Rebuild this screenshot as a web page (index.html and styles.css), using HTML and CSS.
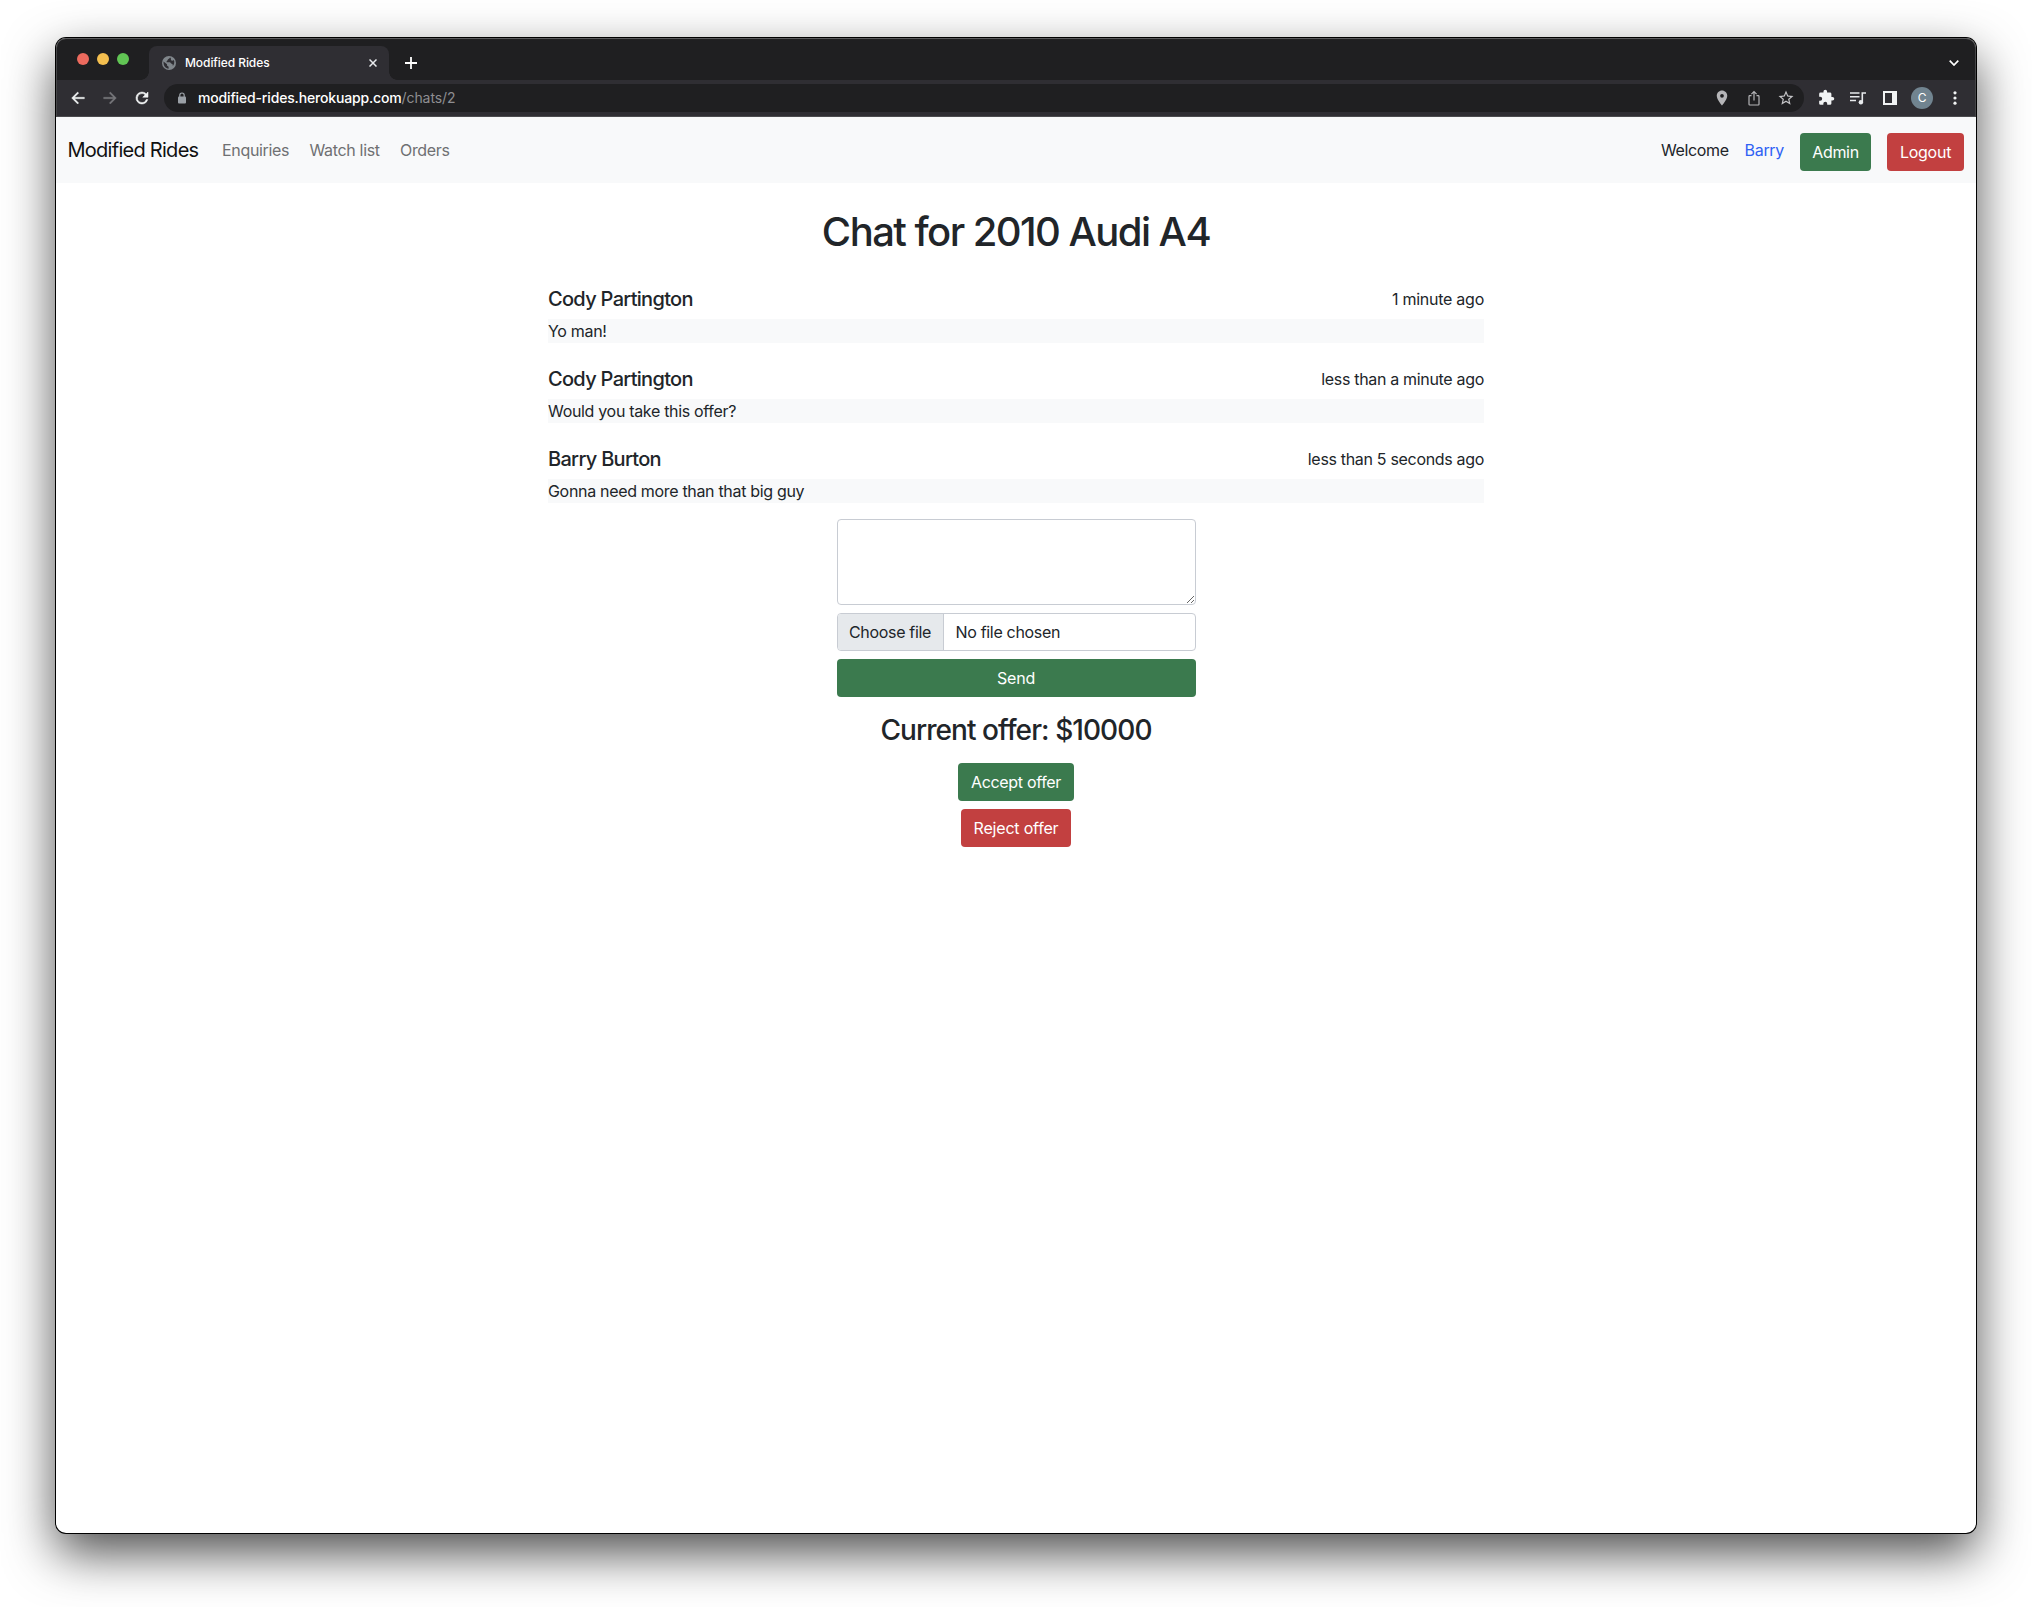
FILE: index.html
```
<!DOCTYPE html>
<html lang="en">
<head>
<meta charset="utf-8">
<title>Modified Rides</title>
<link rel="stylesheet" href="styles.css">
</head>
<body>
<div class="window">
  <header class="tabstrip">
    <div class="lights"><i class="light red"></i><i class="light yellow"></i><i class="light green"></i></div>
    <div class="tab">
      <svg class="favicon" viewBox="0 0 14 14"><circle cx="7" cy="7" r="7" fill="#80868b"/><path d="M1.500 5.600 5 8.200v1.400l1.600 1.100v2C3.600 12.500 1.300 10 1.500 5.600zM8 1.500c-.4 1.300-1.800 1.300-2.400 2.600C5.200 5.200 4.400 5 4.600 6.300h3.200c1 0 .8 1.500 1.900 1.500.9 0 1.200.9 1.100 2.300 1.400-1.400 2-4 1-6-.9.9-2.500 1-2.800-.1C8.700 2.900 9.500 2.300 8 1.500z" fill="#2f2e33"/></svg>
      <span class="tab-title">Modified Rides</span>
      <svg class="close" viewBox="0 0 8 8"><path d="M.5.5l7 7M7.500.5l-7 7" stroke="#e8eaed" stroke-width="1.500"/></svg>
    </div>
    <svg class="plus" viewBox="0 0 12 12"><path d="M6 0v12M0 6h12" stroke="#fff" stroke-width="1.800"/></svg>
    <svg class="chevron" viewBox="0 0 10 6"><path d="M.7.7 5 5 9.300.7" fill="none" stroke="#fff" stroke-width="1.700"/></svg>
  </header>
  <div class="toolbar">
    <svg class="ico" viewBox="0 0 24 24"><path fill="#f1f3f4" stroke="#f1f3f4" stroke-width=".5" d="M20.500 11H7.330l5.590-5.590L11.500 4l-8 8 8 8 1.410-1.410L7.330 13H20.500z"/></svg>
    <svg class="ico" viewBox="0 0 24 24"><path fill="#77777b" stroke="#77777b" stroke-width=".5" d="M12.500 4l-1.410 1.410L16.670 11H3.500v2h13.170l-5.580 5.590L12.500 20l8-8z"/></svg>
    <svg class="ico" viewBox="0 0 24 24"><path fill="#f1f3f4" stroke="#f1f3f4" stroke-width=".7" d="M17.650 6.350A7.960 7.960 0 0 0 12 4a8 8 0 1 0 7.730 10h-2.080A6 6 0 1 1 12 6c1.660 0 3.140.69 4.220 1.780L13 11h7V4z"/></svg>
    <div class="omnibox">
      <svg class="lock" viewBox="0 0 8 12"><path d="M1.800 5V3.200a2.200 2.200 0 0 1 4.400 0V5" fill="none" stroke="#9aa0a6" stroke-width="1.200"/><rect y="4.400" width="8" height="7.100" rx="1" fill="#9aa0a6"/></svg>
      <span class="url">modified-rides.herokuapp.com</span><span class="path">/chats/2</span>
      <div class="omni-icons">
        <svg class="ico" viewBox="0 0 24 24"><path fill="#b5b5b8" d="M12 2C8.130 2 5 5.130 5 9c0 5.250 7 13 7 13s7-7.750 7-13c0-3.870-3.130-7-7-7zm0 9.500a2.500 2.500 0 1 1 0-5 2.500 2.500 0 0 1 0 5z"/></svg>
        <svg class="ico" viewBox="0 0 18 18"><path d="M6.500 6.600H4.800a.8.800 0 0 0-.8.800v7.800a.8.800 0 0 0 .8.800h8.400a.8.800 0 0 0 .8-.8V7.400a.8.800 0 0 0-.8-.8h-1.700M9 11.500V2.800M6.400 5.200 9 2.600l2.600 2.600" fill="none" stroke="#b5b5b8" stroke-width="1.200"/></svg>
        <svg class="ico" viewBox="0 0 24 24"><path fill="#c4c4c7" d="M22 9.240l-7.190-.62L12 2 9.190 8.630 2 9.240l5.460 4.730L5.820 21 12 17.270 18.180 21l-1.630-7.030zM12 15.400l-3.760 2.270 1-4.280-3.320-2.880 4.380-.38L12 6.100l1.710 4.040 4.380.38-3.320 2.880 1 4.280z"/></svg>
      </div>
    </div>
    <svg class="ico" viewBox="-1 0 25 25"><path fill="#f1f3f4" d="M20.500 11H19V7a2 2 0 0 0-2-2h-4V3.500a2.500 2.500 0 0 0-5 0V5H4a2 2 0 0 0-2 2v3.800h1.500a2.700 2.700 0 0 1 0 5.400H2V20a2 2 0 0 0 2 2h3.800v-1.500a2.700 2.700 0 0 1 5.400 0V22H17a2 2 0 0 0 2-2v-4h1.500a2.500 2.500 0 0 0 0-5z"/></svg>
    <svg class="ico" viewBox="-1 -2.500 18 18"><path d="M0 1.500h9.500M0 5.200h9.500M0 8.900h6" stroke="#e8eaed" stroke-width="1.500"/><path d="M12.300 10.500V1.500h3.700" fill="none" stroke="#e8eaed" stroke-width="1.600"/><circle cx="10.900" cy="10.700" r="2.200" fill="#e8eaed"/></svg>
    <svg class="ico panel" viewBox="-2 -2 18 18"><path fill="#f1f3f4" fill-rule="evenodd" d="M0 0h14v14H0zM2 2v10h7V2z"/></svg>
    <span class="avatar">C</span>
    <svg class="dots" viewBox="0 0 4 14"><circle cx="2" cy="1.800" r="1.600" fill="#f1f3f4"/><circle cx="2" cy="7" r="1.600" fill="#f1f3f4"/><circle cx="2" cy="12.200" r="1.600" fill="#f1f3f4"/></svg>
  </div>
  <nav class="navbar">
    <a class="brand">Modified Rides</a>
    <a class="nav-link enquiries">Enquiries</a>
    <a class="nav-link watch">Watch list</a>
    <a class="nav-link orders">Orders</a>
    <div class="account">
      <span class="welcome">Welcome</span>
      <a class="user">Barry</a>
      <button class="btn success admin">Admin</button>
      <button class="btn danger logout">Logout</button>
    </div>
  </nav>
  <main class="page">
    <h1>Chat for 2010 Audi A4</h1>
    <section class="messages">
      <article class="message"><div class="meta"><h5>Cody Partington</h5><span class="minute">1 minute ago</span></div><p>Yo man!</p></article>
      <article class="message"><div class="meta"><h5>Cody Partington</h5><span>less than a minute ago</span></div><p>Would you take this offer?</p></article>
      <article class="message"><div class="meta"><h5>Barry Burton</h5><span>less than 5 seconds ago</span></div><p>Gonna need more than that big guy</p></article>
    </section>
    <form class="reply">
      <textarea class="text"></textarea>
      <div class="file"><span class="choose">Choose file</span><span class="none">No file chosen</span></div>
      <button type="button" class="btn success send">Send</button>
    </form>
    <h3>Current offer: $10000</h3>
    <div class="actions">
      <button class="btn success accept">Accept offer</button>
      <button class="btn danger reject">Reject offer</button>
    </div>
  </main>
</div>
</body>
</html>
```
FILE: styles.css
```
* { box-sizing: border-box; }
body { margin: 0; height: 1607px; padding: 38px 56px; background: #fff; font: 400 16px/24px Inter, sans-serif; letter-spacing: -.32px; color: #212529; overflow: hidden; }
.window { width: 1920px; height: 1495px; border-radius: 10px; background: #fff; overflow: hidden; box-shadow: 0 0 0 1px #000, 0 20px 50px rgba(0,0,0,.7); }
svg { display: block; flex: none; }

/* browser chrome */
.tabstrip { height: 42px; background: #1f1f21; display: flex; align-items: center; border-radius: 10px 10px 0 0; box-shadow: inset 0 1px #5b5b5d, inset 1px 0 #464648, inset -1px 0 #464648; padding-left: 21px; }
.lights { display: flex; gap: 8px; }
.light { width: 12px; height: 12px; border-radius: 50%; }
.red { background: #ec6a5e; }
.yellow { background: #f4bf4f; }
.green { background: #61c554; }
.tab { align-self: flex-end; width: 240px; height: 34px; margin-left: 20px; border-radius: 8px 8px 0 0; background: #2f2e33; display: flex; align-items: center; padding: 0 12px 0 13px; position: relative; }
.tab::before, .tab::after { content: ""; position: absolute; bottom: 0; width: 8px; height: 8px; }
.tab::before { left: -8px; background: radial-gradient(circle at 0 0, transparent 7.5px, #2f2e33 8px); }
.tab::after { right: -8px; background: radial-gradient(circle at 100% 0, transparent 7.5px, #2f2e33 8px); }
.favicon { width: 14px; height: 14px; }
.tab-title { margin-left: 9px; font-size: 12px; letter-spacing: -.08px; color: #fff; font-weight: 500; }
.close { width: 8px; height: 8px; margin-left: auto; }
.plus { width: 12px; height: 12px; margin: 8px 0 0 16px; }
.chevron { width: 10px; height: 6px; margin: 8px 17px 0 auto; }
.toolbar { height: 37px; background: #2f2e33; border-bottom: 1px solid #4b4b4e; box-shadow: inset 1px 0 #464648, inset -1px 0 #464648; display: flex; align-items: center; padding: 0 19px 0 13px; }
.ico { width: 18px; height: 18px; margin-right: 14px; }
.omnibox { flex: 1; height: 28px; margin: 0 13px 0 -1px; border-radius: 14px; background: #1f1f21; display: flex; align-items: center; padding: 0 9px 0 14px; }
.lock { width: 8px; height: 12px; }
.url { font-size: 14px; color: #fff; margin-left: 12px; font-weight: 500; letter-spacing: -.16px; }
.path { font-size: 14px; color: #8e8e91; letter-spacing: -.1px; }
.omni-icons { display: flex; margin-left: auto; }
.omni-icons .ico:last-child { margin-right: 0; }
.panel { margin-right: 12px; }
.avatar { width: 22px; height: 22px; border-radius: 50%; background: #718490; color: #fff; font-size: 12px; line-height: 22px; text-align: center; }
.dots { width: 4px; height: 14px; margin-left: 20px; }

/* site navigation */
.navbar { height: 66px; background: #f8f9fa; display: flex; align-items: center; padding: 0 12px 0 11.5px; }
.brand { font-size: 20px; letter-spacing: -.73px; color: #111; }
.nav-link { color: #6f7072; }
.enquiries { margin-left: 23.6px; }
.watch { margin-left: 20.2px; }
.orders { margin-left: 20.2px; }
.account { margin-left: auto; display: flex; gap: 16px; align-items: center; }
.welcome { letter-spacing: -.38px; }
.user { color: #2f62f4; }
.btn { border: 0; border-radius: 4px; height: 38px; color: #fff; font: inherit; letter-spacing: -.33px; padding: 0; text-align: center; }
.success { background: #3b7a4e; }
.danger { background: #c24040; }
.admin { width: 71px; margin-top: 4px; }
.logout { width: 77px; margin-top: 4px; letter-spacing: -.25px; }

/* chat */
.page { display: flex; flex-direction: column; align-items: center; padding-top: 25px; }
h1, h3, h5, p { margin: 0; font-weight: 550; }
h1 { font-size: 40px; line-height: 48px; letter-spacing: -1.55px; }
.messages { width: 936px; margin: 31px 0 16px; display: grid; gap: 24px; }
.meta { display: flex; justify-content: space-between; margin-bottom: 8px; }
.minute { letter-spacing: -.25px; }
h5 { font-size: 20px; line-height: 24px; letter-spacing: -.7px; }
p { font-weight: 400; background: #f8f9fa; }
.reply { width: 359px; margin-left: 1px; display: grid; gap: 8px; }
.text { display: block; width: 100%; height: 86px; border: 1px solid #c8ccd3; border-radius: 4px; background: #fff; resize: vertical; }
.file { height: 38px; display: flex; border: 1px solid #c8ccd3; border-radius: 4px; overflow: hidden; line-height: 36px; }
.choose { width: 106px; padding-left: 11px; background: #e6e9ec; border-right: 1px solid #c8ccd3; }
.none { padding-left: 11.5px; }
.send { letter-spacing: -.2px; padding-right: 1px; }
h3 { font-size: 28px; line-height: 34px; letter-spacing: -.93px; margin: 16px 0; }
.actions { display: grid; justify-items: center; gap: 8px; }
.accept { width: 116px; }
.reject { width: 110px; letter-spacing: -.2px; }
```
